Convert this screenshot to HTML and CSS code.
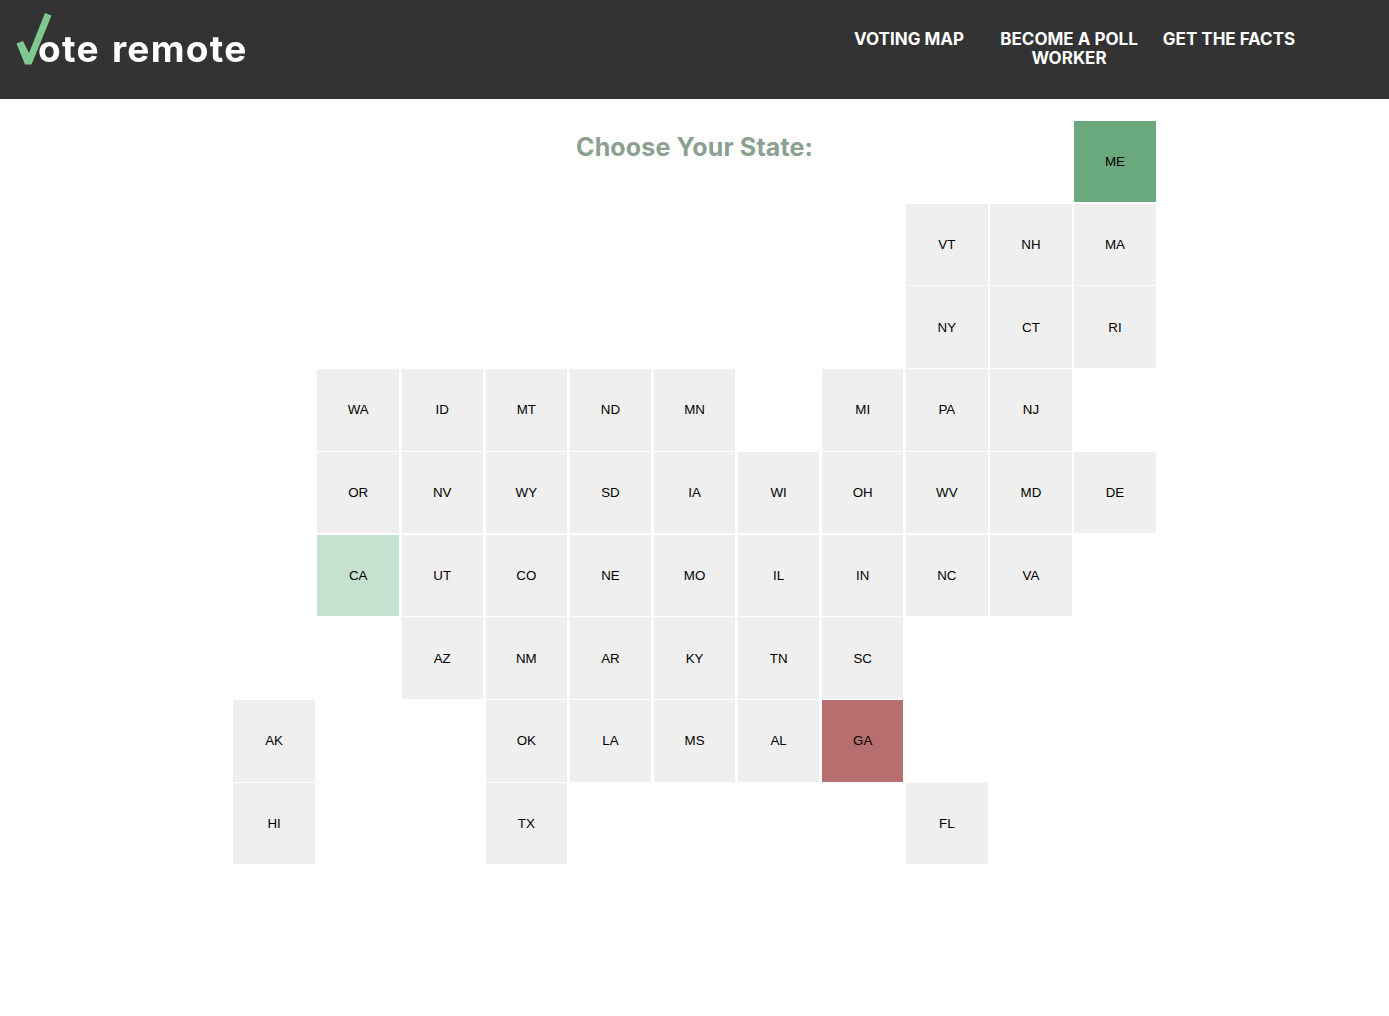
FILE: index.html
```html
<!DOCTYPE html>
<html lang="en">
<head>
<meta charset="utf-8">
<title>Vote Remote</title>
<link rel="stylesheet" href="styles.css">
</head>
<body>
<header class="site-header">
  <a class="logo" href="#">
    <svg class="logo-check" viewBox="0 0 36 52" width="36" height="52" aria-hidden="true"><polygon points="29,0 35.5,2.5 15.5,51.5 9,51.5 0.5,30.5 7,28 13,40"/></svg>
    <span class="logo-text">ote remote</span>
  </a>
  <nav class="nav">
    <a class="nav-link" href="#">VOTING MAP</a>
    <a class="nav-link" href="#">BECOME A POLL<br>WORKER</a>
    <a class="nav-link" href="#">GET THE FACTS</a>
  </nav>
</header>
<main class="map">
  <h1 class="map-title">Choose Your State:</h1>
  <button class="state state-me">ME</button>

  <i></i><i></i><i></i><i></i><i></i><i></i><i></i><i></i>
  <button class="state">VT</button><button class="state">NH</button><button class="state">MA</button>

  <i></i><i></i><i></i><i></i><i></i><i></i><i></i><i></i>
  <button class="state">NY</button><button class="state">CT</button><button class="state">RI</button>

  <i></i>
  <button class="state">WA</button><button class="state">ID</button><button class="state">MT</button><button class="state">ND</button><button class="state">MN</button>
  <i></i>
  <button class="state">MI</button><button class="state">PA</button><button class="state">NJ</button>
  <i></i>

  <i></i>
  <button class="state">OR</button><button class="state">NV</button><button class="state">WY</button><button class="state">SD</button><button class="state">IA</button><button class="state">WI</button><button class="state">OH</button><button class="state">WV</button><button class="state">MD</button><button class="state">DE</button>

  <i></i>
  <button class="state state-ca">CA</button><button class="state">UT</button><button class="state">CO</button><button class="state">NE</button><button class="state">MO</button><button class="state">IL</button><button class="state">IN</button><button class="state">NC</button><button class="state">VA</button>
  <i></i>

  <i></i><i></i>
  <button class="state">AZ</button><button class="state">NM</button><button class="state">AR</button><button class="state">KY</button><button class="state">TN</button><button class="state">SC</button>
  <i></i><i></i><i></i>

  <button class="state">AK</button>
  <i></i><i></i>
  <button class="state">OK</button><button class="state">LA</button><button class="state">MS</button><button class="state">AL</button><button class="state state-ga">GA</button>
  <i></i><i></i><i></i>

  <button class="state">HI</button>
  <i></i><i></i>
  <button class="state">TX</button>
  <i></i><i></i><i></i><i></i>
  <button class="state">FL</button>
</main>
</body>
</html>
```
FILE: styles.css
```css
* { box-sizing: border-box; }
html, body { margin: 0; background: #fff; }
body { font-family: "Inter", "Liberation Sans", sans-serif; }

.site-header {
  height: 99px;
  background: #333;
  display: flex;
  align-items: flex-start;
  justify-content: space-between;
  padding-right: 80px;
}

.logo {
  display: flex;
  align-items: flex-start;
  margin: 13px 0 0 16px;
  text-decoration: none;
  filter: blur(0.3px);
}
.logo-check { fill: #80c98e; flex: none; }
.logo-text {
  margin: 12px 0 0 -14px;
  color: #fff;
  font-size: 37px;
  line-height: 48px;
  font-weight: 700;
  letter-spacing: 1.3px;
  word-spacing: 2px;
  white-space: nowrap;
}

.nav { display: flex; padding-top: 30px; }
.nav-link {
  width: 160px;
  color: #fff;
  text-align: center;
  text-decoration: none;
  font-size: 17px;
  line-height: 19px;
  font-weight: 700;
}

.map {
  width: 922.44px;
  margin: 21.8px 0 0 233.35px;
  display: grid;
  grid-template-columns: repeat(11, 81.44px);
  grid-auto-rows: 81.6px;
  gap: 1.16px 2.66px;
}
.map-title {
  grid-row: 1;
  grid-column: 1 / -1;
  margin: 10px 0 0;
  text-align: center;
  color: #8ba093;
  font-size: 25px;
  line-height: 32px;
  font-weight: 700;
  letter-spacing: 0.15px;
}
.state {
  border: 0;
  padding: 0;
  background: #efefef;
  color: #000;
  font-family: "Liberation Sans", Arial, sans-serif;
  font-size: 13.333px;
}
.state-me { grid-row: 1; grid-column: 11; background: #6aa87d; }
.state-ca { background: #c5e1d0; }
.state-ga { background: #b66e6e; }
```
